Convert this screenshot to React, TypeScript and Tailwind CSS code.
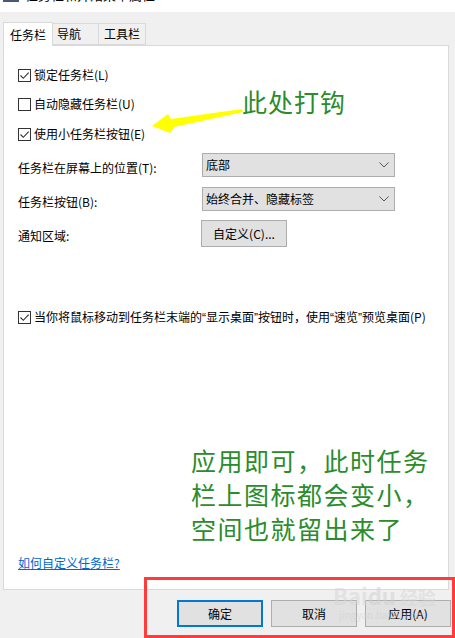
import type { ReactNode } from 'react'

const FONT = { fontFamily: '"Noto Sans CJK SC", "Noto Sans", sans-serif' }
const LATIN = { fontFamily: '"Liberation Sans", sans-serif' }

function CheckBox({ checked }: { checked: boolean }) {
  return (
    <span className="flex h-[13px] w-[13px] shrink-0 items-center justify-center border border-[#333] bg-white">
      {checked && (
        <svg width="11" height="11" viewBox="0 0 11 11">
          <path d="M1.5 5.5 L4.3 8.3 L9.7 2.6" fill="none" stroke="#333" strokeWidth="1.1" />
        </svg>
      )}
    </span>
  )
}

function CheckRow({ checked, children, className = '' }: { checked: boolean; children: ReactNode; className?: string }) {
  return (
    <div className={`flex h-[16px] items-center gap-[3px] ${className}`}>
      <CheckBox checked={checked} />
      <span className="text-[12px] leading-[16px] text-black whitespace-nowrap">{children}</span>
    </div>
  )
}

function Select({ value }: { value: string }) {
  return (
    <div className="flex h-[24px] w-[193px] items-center justify-between border border-[#adadad] bg-[#e1e1e1] pl-[3px] pr-[5px]">
      <span className="text-[12px] leading-[16px] text-black">{value}</span>
      <svg width="10" height="6" viewBox="0 0 10 6">
        <path d="M0.5 0.5 L5 5 L9.5 0.5" fill="none" stroke="#555" strokeWidth="1" />
      </svg>
    </div>
  )
}

function DlgButton({ children, primary = false }: { children: ReactNode; primary?: boolean }) {
  return (
    <button
      className={`flex h-[27px] w-[86px] items-center justify-center bg-[#e1e1e1] text-[12px] text-black ${
        primary ? 'border-2 border-[#0078d7]' : 'border border-[#adadad]'
      }`}
    >
      {children}
    </button>
  )
}

// narrow latin quotes, as the reference renders them
const Q = ({ c }: { c: string }) => <span style={LATIN}>{c}</span>

export default function App() {
  return (
    <div className="relative h-[638px] w-[455px] overflow-hidden bg-[#f0f0f0]" style={FONT}>
      {/* title bar, mostly cut off */}
      <div className="h-[12px] overflow-hidden bg-white">
        <div className="-mt-[13px] flex h-[16px] items-center pl-[3px]">
          <span className="h-[14px] w-[16px] bg-[#4a5878]" />
          <span className="ml-[6px] text-[13px] leading-[16px] text-black">任务栏和开始菜单属性</span>
          <span className="ml-auto mr-[12px] text-[13px] leading-[16px] text-black">✕</span>
        </div>
      </div>

      {/* tabs */}
      <div className="mt-[10px] flex items-end pl-[3px]">
        <div className="relative z-10 -mb-px flex h-[24px] w-[50px] items-center justify-center border border-b-0 border-[#d9d9d9] bg-white text-[12px] text-black">
          任务栏
        </div>
        <div className="flex h-[22px] w-[46px] items-center border border-l-0 border-[#d9d9d9] pl-[4px] text-[12px] text-black">
          导航
        </div>
        <div className="flex h-[22px] w-[47px] items-center justify-center border border-l-0 border-[#d9d9d9] text-[12px] text-black">
          工具栏
        </div>
      </div>

      {/* panel */}
      <div className="ml-[3px] flex h-[545px] w-[446px] flex-col border border-[#d9d9d9] bg-white pl-[14px]">
        <CheckRow checked className="mt-[21px]">锁定任务栏(L)</CheckRow>
        <CheckRow checked={false} className="mt-[13px]">自动隐藏任务栏(U)</CheckRow>
        <CheckRow checked className="mt-[14px]">使用小任务栏按钮(E)</CheckRow>

        <div className="mt-[11px] flex items-start">
          <span className="mt-[7px] w-[184px] text-[12px] leading-[16px] text-black">任务栏在屏幕上的位置(T):</span>
          <Select value="底部" />
        </div>
        <div className="mt-[10px] flex items-start">
          <span className="mt-[7px] w-[184px] text-[12px] leading-[16px] text-black">任务栏按钮(B):</span>
          <Select value="始终合并、隐藏标签" />
        </div>
        <div className="mt-[9px] flex items-start">
          <span className="mt-[8px] w-[183px] text-[12px] leading-[16px] text-black">通知区域:</span>
          <button className="flex h-[27px] w-[86px] items-center justify-center border border-[#adadad] bg-[#e1e1e1] text-[12px] text-black">
            自定义(C)...
          </button>
        </div>

        <CheckRow checked className="mt-[62px]">
          当你将鼠标移动到任务栏末端的<Q c="“" />显示桌面<Q c="”" />按钮时，使用<Q c="“" />速览<Q c="”" />预览桌面(P)
        </CheckRow>

        <a className="mt-auto mb-[18px] text-[12px] leading-[16px] text-[#0066cc] underline">如何自定义任务栏?</a>
      </div>

      {/* dialog buttons */}
      <div className="mt-[10px] flex justify-end gap-[8px] pr-[4px]">
        <DlgButton primary>确定</DlgButton>
        <DlgButton>取消</DlgButton>
        <DlgButton>应用(A)</DlgButton>
      </div>

      {/* annotations drawn over the screenshot */}
      <svg className="absolute left-0 top-0" width="455" height="638">
        <polygon points="152,126 168,114 171,119 242,109 243,112 174,127 170,133" fill="#ffff00" />
      </svg>
      <div className="absolute left-[242px] top-[85px] text-[25px] leading-[32px] tracking-[1px] text-[#2a8c2a]">此处打钩</div>
      <div className="absolute left-[191px] top-[443px] w-[250px] text-[25px] leading-[34px] tracking-[1.5px] text-[#2a8c2a]">
        <div>应用即可，此时任务</div>
        <div>栏上图标都会变小，</div>
        <div>空间也就留出来了</div>
      </div>

      {/* watermark */}
      <div className="pointer-events-none absolute left-[333px] top-[583px] flex flex-col items-start opacity-50">
        <span className="text-[22px] font-bold leading-[24px] text-[#d6d6d6]">
          Bai<span className="text-[#cfcfcf]">du</span>
          <span className="ml-[4px] text-[18px]">经验</span>
        </span>
        <span className="ml-[6px] text-[10px] leading-[12px] text-[#d0d0d0]">jingyan.baidu.com</span>
      </div>

      <div className="absolute left-[144px] top-[577px] h-[61px] w-[311px] border-[3px] border-[#ff3b3b]" />
    </div>
  )
}
